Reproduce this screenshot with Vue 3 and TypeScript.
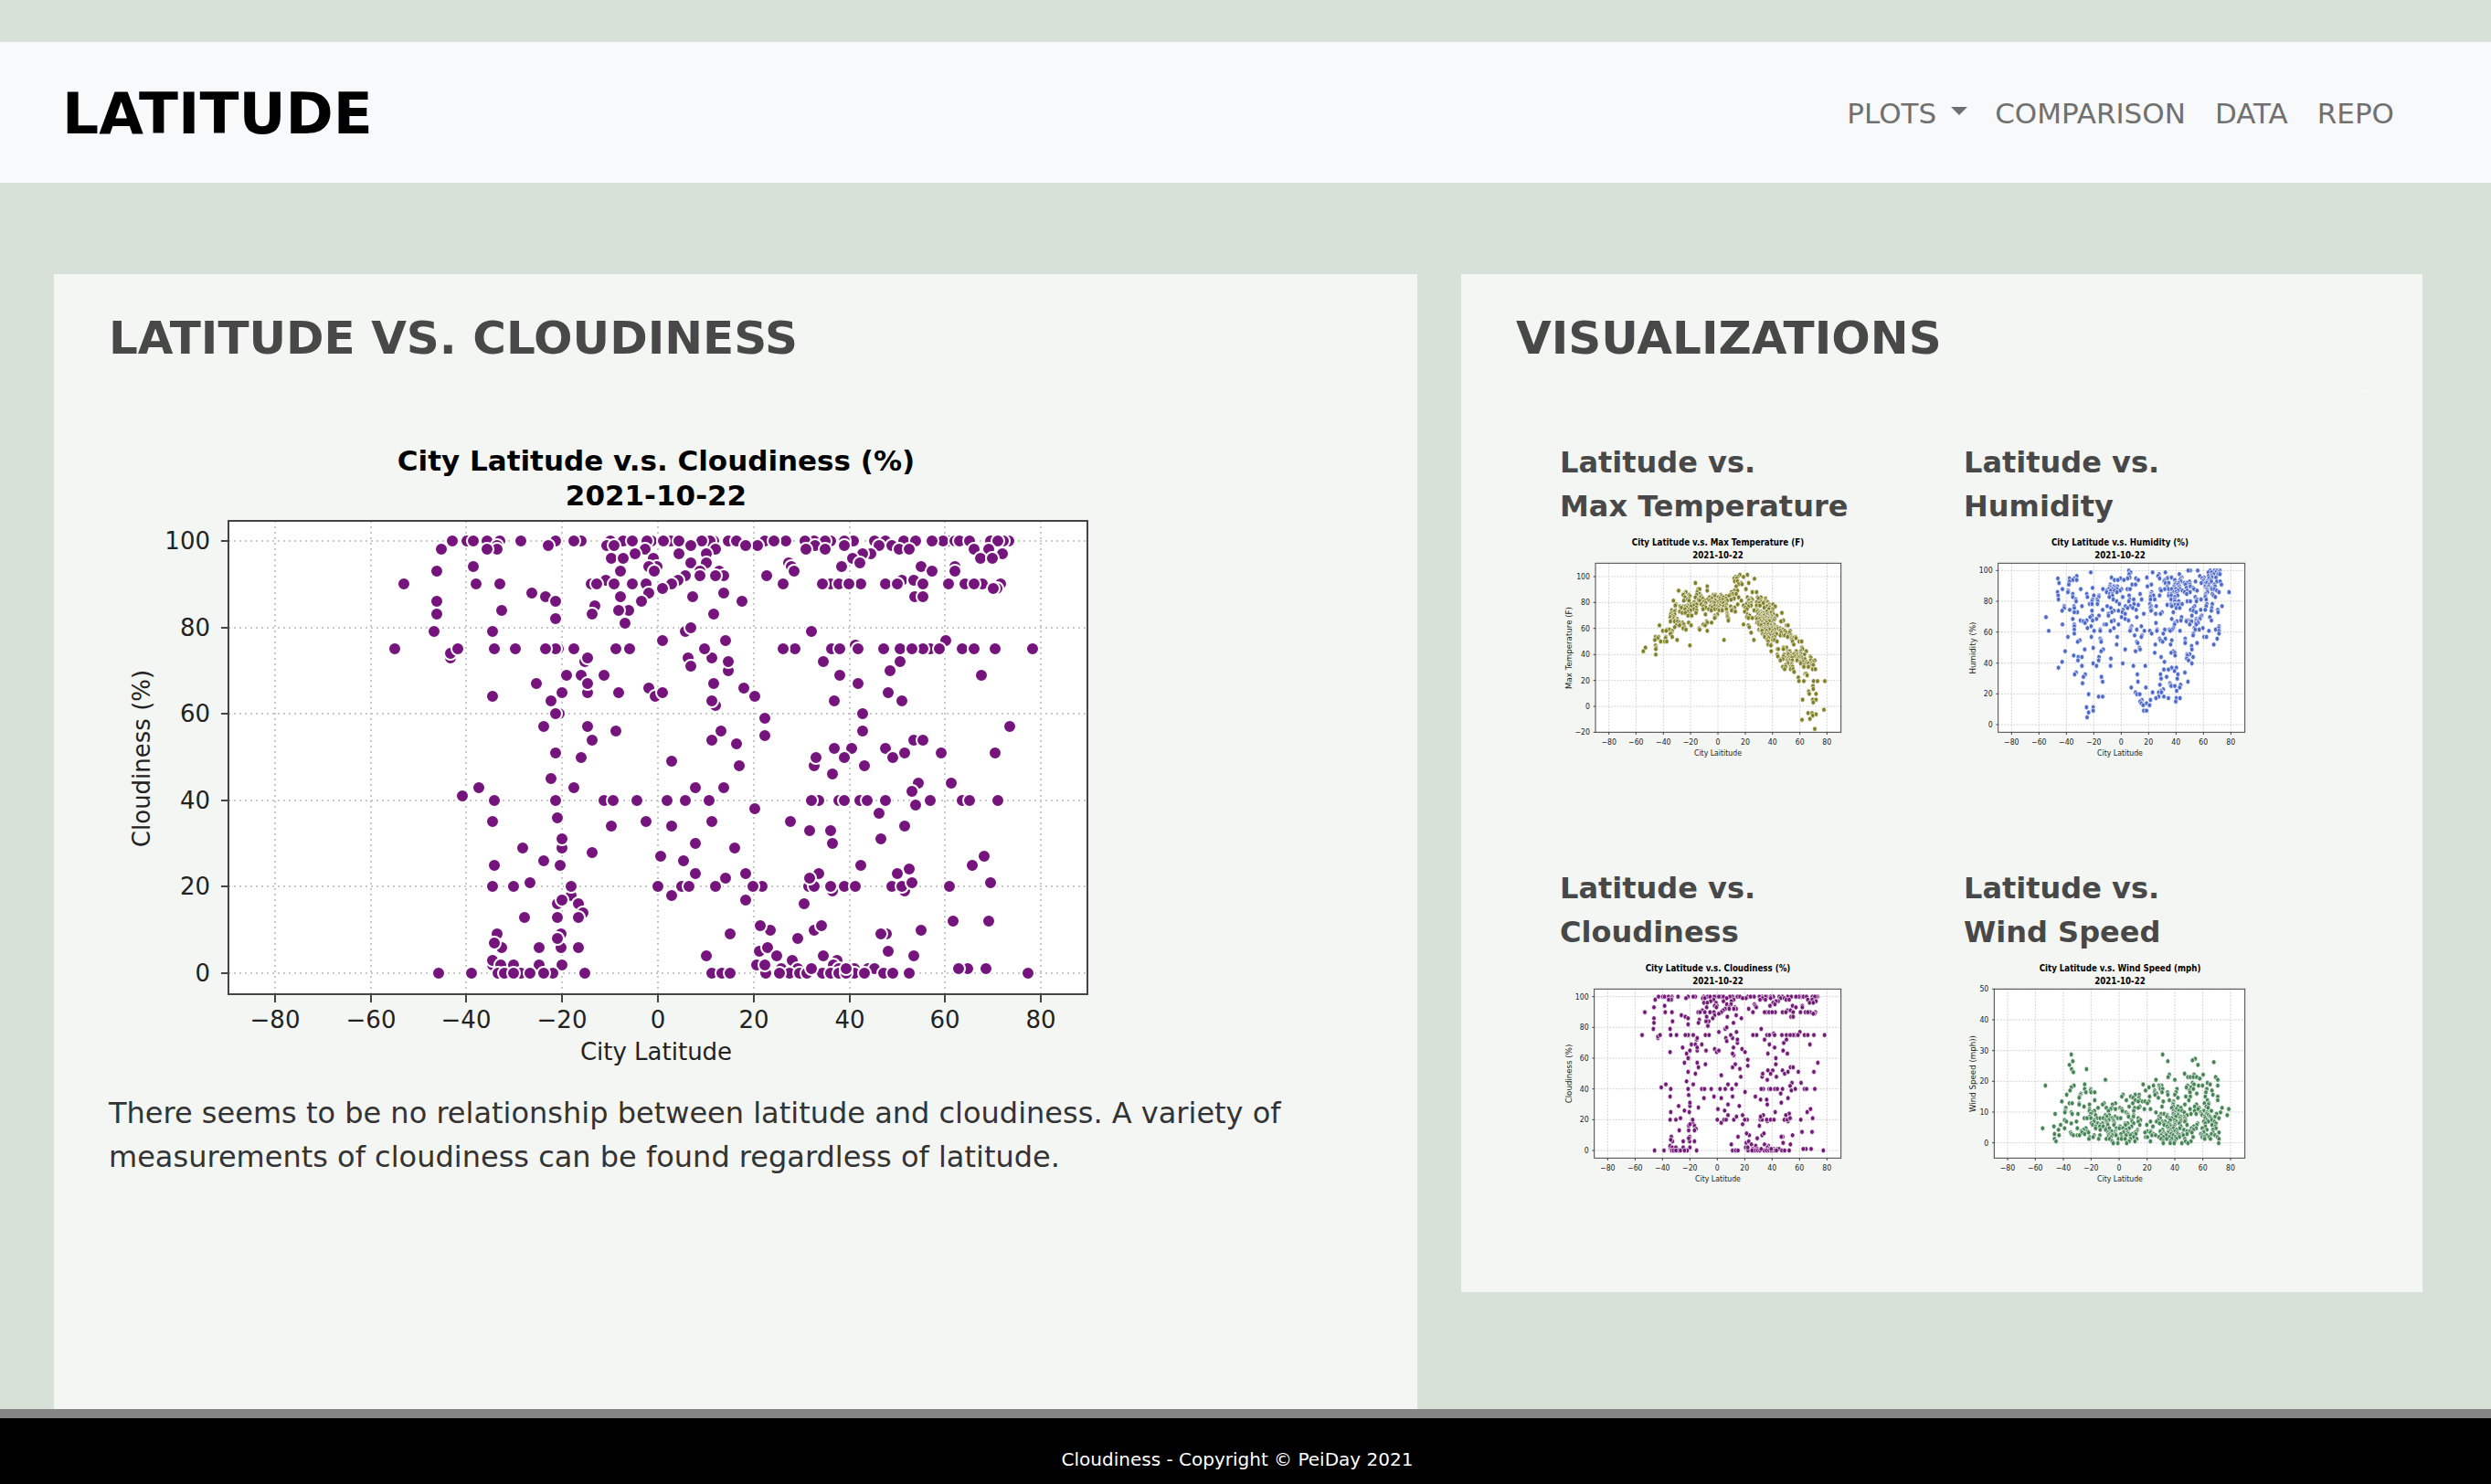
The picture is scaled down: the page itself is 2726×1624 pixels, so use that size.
<script setup lang="ts">
interface Dot { x: number; y: number }
interface Tick { at: number; text: string }
interface Chart {
  id: string
  heading: string
  title: string
  xLabel: string
  yLabel: string
  color: string
  view: string
  frame: { x: number; y: number; w: number; h: number }
  xTicks: Tick[]
  yTicks: Tick[]
  dots: Dot[]
}

// Cloudiness percentage, followed by the latitudes of the cities measured at it.
const cloudiness: [number, number[]][] = [
  [100, [-39.8, -42.9, -38.5, -33.1, -35.6, -28.7, -21.4, -16.1, -17.5, -10, -7.2, -5.3, -1.3, -2.3, 2.6, 1.1, 4.4, 11.6, 10.8, 9.2, 14.6, 16.5, 22.3, 26.8, 24.3, 32.6, 30.7, 36, 35, 40.8, 38.9, 45.2, 47.6, 51.3, 53.9, 60.8, 59.5, 57.3, 62, 62.9, 65, 73.2, 72.2, 69.4, 71]],
  [99, [-22.9, -33.5, -10.6, -9.2, 6.8, 20.8, 18.4, 32.9, 46.2, 48.9, 38.9]],
  [98, [-45.3, -33.6, -35.6, 12, -2.6, 31, 35, 50.3, 52.5, 66.1, 69]],
  [97, [-4.8, 4.4, 10.2, 44.5, 42.8, 71.9]],
  [96, [-9.8, -7.3, -0.9, 40.7, 67.4, 69.9]],
  [95, [6.8, 10.1, 27.2, 42.1]],
  [94, [-38.5, -0.2, -1.9, 27.8, 38.4, 54.9, 62.1]],
  [93, [-46.2, -7.8, -0.7, 8.7, 12.8, 28.4, 57.3, 62.1]],
  [92, [5.8, 8.7, 13.7, 12.1, 22.8]],
  [91, [-10.8, 4.2, 51, 53.4]],
  [90, [-53, -38, -33.1, -14, -12.7, -9.2, -5.3, -2.5, 2.9, 26.1, 36, 34.4, 37.7, 42.3, 39.9, 47.6, 50, 55.4, 60.7, 64.2, 67.7, 66.1, 71.5]],
  [89, [1, 70.8, 70]],
  [88, [-26.3, -1.9, 13.7]],
  [87, [-23.4, -7.8, 7.3, 53.7, 55.4]],
  [86, [-46.2, -21.4, -3.4, 17.5]],
  [85, [-13.2]],
  [84, [-32.6, -6.2, -8.3]],
  [83, [-46.2, -13.7, 11.7]],
  [82, [-21.4]],
  [81, [-6.8]],
  [79, [-46.7, -34.5, 5.7, 32]],
  [80, [6.8]],
  [77, [1, 14.1, 60.2]],
  [76, [41.2]],
  [73, [-43.3]],
  [74, [-43.4]],
  [72, [-15.2]],
  [73, [-14.6, 6.3, 11.2]],
  [75, [-54.9, -41.8, -34.1, -29.7, -20.8, -21.4, -23.4, -17.5, -8.7, -5.9, 9.7, 28.7, 26.1, 36.3, 37.9, 41.8, 47.1, 50.5, 56.8, 55.4, 53, 58.8, 63.6, 66.1, 70.4, 78.2]],
  [70, [14.6, 48.5]],
  [72, [14.6, 34.5, 50.5]],
  [71, [6.8]],
  [69, [-19, -16.1, -11.3, 37.9, 67.5]],
  [65, [-20, -14.6, -8.3]],
  [67, [-25.3, -14.6, 11.7, 41.8]],
  [66, [-1.9, 18]],
  [64, [-34.5, -0.5, 20.3]],
  [65, [1, 48.1]],
  [62, [12.1]],
  [63, [-22.4, 11.2, 36.9, 51]],
  [60, [-20.6, -21.4, 42.7]],
  [59, [22.3]],
  [57, [-23.9, -14.6, 73.4]],
  [56, [-8.7, 13.1, 42.7]],
  [55, [22.3]],
  [54, [-13.7, 11.2, 53.4, 55.4]],
  [53, [16.5]],
  [52, [36.9, 40.4, 47.6]],
  [50, [-16.1, 38.9, 49.1]],
  [51, [-21.4, 51.5, 59.2, 70.4]],
  [49, [2.9]],
  [48, [17, 32.6, 43.2]],
  [50, [33.1]],
  [46, [36.5]],
  [45, [-22.4]],
  [44, [54.4, 61.2]],
  [43, [-37.5, -17.5, 7.8, 13.7]],
  [42, [53]],
  [41, [-40.9]],
  [39, [53.9]],
  [40, [-34.1, -21.4, -11.3, -9.3, -4.4, 2, 5.8, 10.6, 33.6, 32.1, 37.7, 38.9, 42.1, 43.7, 47.6, 56.8, 63.5, 65.1, 71]],
  [38, [20.3]],
  [37, [46.2]],
  [36, [-21]],
  [35, [-34.5, -2.5, 11.2, 27.7]],
  [34, [-9.8, 2.9, 51.5]],
  [30, [7.8, 36.5]],
  [33, [31.6, 36]],
  [29, [-28.2, -20, 16]],
  [31, [-20, 46.6]],
  [28, [-13.7]],
  [27, [0.5, 68.1]],
  [26, [-23.9, 5.3]],
  [25, [-34.1, -20.5, 42.3, 65.6]],
  [24, [52.5]],
  [23, [7.8, 18.4, 33.6, 50]],
  [18, [-18.1, 2.9]],
  [19, [36.5, 51.5]],
  [20, [-34.5, -30.2, -18.1, 0, 4.9, 6.4, 12.1, 21.8, 19.9, 31.4, 32.6, 36, 38.9, 41.3, 48.9, 51, 60.8]],
  [22, [14.1, 31.6]],
  [21, [-26.8, 53, 69.5]],
  [16, [-21, -16.6, 30.6]],
  [17, [-20, 18.4]],
  [14, [-15.6]],
  [13, [-27.8, -21, -16.6]],
  [12, [61.7, 69]],
  [10, [23.4, 32.6, 54.9]],
  [11, [21.4, 34.1]],
  [9, [-33.6, -20.3, 15.1, 47.8, 46.6]],
  [6, [-32.6, -24.8, -20.3, -16.6]],
  [7, [-34.1]],
  [8, [-21, 29.2]],
  [5, [21.2, 48.1]],
  [6, [22.9]],
  [4, [10.2, 24.8, 34.5, 53.4]],
  [2, [-34.5]],
  [3, [-34.5, 28.1, 37.4]],
  [2, [-32.8, -30.2, -24.8, -20, 20.6, 36.7]],
  [1, [25.7, 29.2, 37.7, 41, 43.8, 45.2]],
  [0, [-45.8, -39, -33.4, -32, -28.6, -30.2, -26.8, -21.9, -23.9, -15.2, 11.2, 13.4, 15.1, 22.5, 27.4, 25.3, 29.5, 31.2, 34.3, 36, 37.7, 41, 39.4, 43.2, 47.1, 49.1, 52.5, 77.3]],
  [2, [22.3]],
  [1, [32.1, 39.4, 64.6, 62.7, 68.5]],
]

function plotCloudiness(x0: number, dx: number, y0: number, dy: number): Dot[] {
  return cloudiness.flatMap(([v, lats]) =>
    lats.map((lat) => ({ x: Math.round(x0 + lat * dx), y: Math.round(y0 - v * dy) })))
}

// Rows of "y: x x x" in drawing units.
function parse(rows: string): Dot[] {
  return rows.trim().split('\n').flatMap((row) => {
    const [y, xs] = row.split(':')
    return xs.trim().split(/\s+/).map((x) => ({ x: Number(x), y: Number(y) }))
  })
}

function latTicks(x0: number, dx: number): Tick[] {
  return [-80, -60, -40, -20, 0, 20, 40, 60, 80].map((v) => ({
    at: Math.round(x0 + v * dx),
    text: String(v).replace('-', '−'),
  }))
}

function valueTicks(values: number[], y0: number, dy: number): Tick[] {
  return values.map((v) => ({ at: Math.round(y0 - v * dy), text: String(v).replace('-', '−') }))
}

const main = {
  frame: { x: 250, y: 570, w: 940, h: 518 },
  xTicks: latTicks(720, 5.24),
  yTicks: valueTicks([0, 20, 40, 60, 80, 100], 1065, 4.73),
  dots: plotCloudiness(720, 5.24, 1065, 4.73),
}

const charts: Chart[] = [
  {
    id: 'temperature',
    heading: 'Max Temperature',
    title: 'City Latitude v.s. Max Temperature (F)',
    xLabel: 'City Laititude',
    yLabel: 'Max Temperature (F)',
    color: '#808026',
    view: '81 330 960 780',
    frame: { x: 198, y: 439, w: 806, h: 555 },
    xTicks: latTicks(600, 4.48),
    yTicks: valueTicks([-20, 0, 20, 40, 60, 80, 100], 909, 4.26),
    dots: parse(`
477: 672 697
484: 684 665 657
489: 653 662
490: 720
498: 655 664
504: 526 701 677
508: 668 679
515: 565 660
524: 535 692 540
529: 471 565 654 664
534: 495 532 645 713 727
540: 488 540 655 648 660
543: 486 505 530 585 610 640 592
547: 508 545 590 612 628 636
551: 492 526 543 572 601 618 668 697 741 730
555: 505 550 580 606 627 653 710 733 756
559: 499 536 565 590 615 640 643 713 702
562: 454 488 505 540 556 573 592 605 630 677 701 741 755
567: 522 553 578 585 600 622 710 727 742 763 752
570: 560 589 608 618 697 708 735 749
574: 462 512 521 530 545 601 628 665 702 768 781 692
578: 460 500 520 556 577 590 605 624 684 709 727 765 738
581: 476 485 494 511 552 575 598 618 642 700 760 788
585: 480 498 529 560 580 602 626 655 690 752 770
590: 492 506 521 551 570 590 600 613 628 647 695 725 767 780
594: 448 460 510 530 578 604 614 645 722 731 719
598: 457 475 500 688 657 730 742 760 779
602: 447 483 493 528 630 736 745 750 770 775 810
607: 445 458 508 559 598 631 697 732 742 753 763 783
611: 450 502 514 590 631 704 738 747 752 768 775 793
616: 444 455 592 632 695 726 741 756 770 778
619: 589 700 713 731 744 760 768 786
622: 454 466 635 728 738 750 767 776 786
627: 447 462 634 743 752 762 773 783 815
630: 444 458 468 563 807 740 757 769
634: 475 484 504 579 565 728 733 746 760 780
640: 479 488 552 684 735 747 753 765 782 784
643: 408 463 474 512 558 700 742 775 825 830 786
649: 458 490 703 750 756 764 777 786 795
653: 486 539 745 757 768 779 788 797 805
657: 432 441 495 540 735 742 755 770 786 810 813
661: 419 565 430 450 742 745 760 780 805 820 837
667: 447 709 765 778 788 808 825 835
671: 444 747 757 768 784 792
676: 752 763 773 782 805 815 820 830 840
681: 395 405 429 450 754 765 786 829 843 855
685: 402 428 766 780 842 848 856
691: 393 466 620 718 762 780 786 843
696: 425 432 412 765 794 867 875 845
706: 765 775 849
709: 508 395 774
716: 362 397 825 815 876
721: 396 795 815 878 798
728: 355 775 830 836 857 890 872
735: 829 840 852 872
739: 396 795 817 831 845 849 860 876 884
745: 797 815 840 854 862 870 903
749: 825 832 843 864 877 905
754: 806 813 829 860 880 886
758: 805 827 836 844 918 860 905
763: 829 870 880 891 912
768: 830 842 872 889 897 907
773: 822 841 883 908 913
779: 813 822 839 845 882 896 897
787: 819 839 847 911 920
796: 850
802: 886 890
807: 893
814: 864
826: 866 914 927 951 882
842: 912
852: 913
860: 898
868: 900 922
887: 878 911 922
896: 913
920: 948
931: 896 909
935: 922
939: 911
950: 902
953: 876
983: 918
`),
  },
  {
    id: 'humidity',
    heading: 'Humidity',
    title: 'City Latitude v.s. Humidity (%)',
    xLabel: 'City Latitude',
    yLabel: 'Humidity (%)',
    color: '#4d69c9',
    view: '87 330 960 780',
    frame: { x: 200, y: 439, w: 810, h: 555 },
    xTicks: latTicks(604, 4.5),
    yTicks: valueTicks([0, 20, 40, 60, 80, 100], 969, 5.06),
    dots: parse(`
463: 629 831 824 855 896 910 918 928
469: 504 635 707 749 890 901 915 925
475: 630 728 795 907 922 928
481: 458 725 862 891 901
486: 572 632 688 757 769 803 876 902 915
489: 396 434 450 602 625 652 730 755 799 870 892
494: 445 458 582 593 613 660 747 780 797 875 898
499: 434 745 800 848 828 872 885 900 918 929
504: 400 749 760 783 793 811 820 867 880 885
509: 432 568 640 651 703 780 790 815 830 892 910 933
515: 580 690 567 591 755 778 795 831 880 890 912
520: 510 570 585 755 780 793 818 840 885 900
524: 411 471 544 562 575 590 605 624 633 732 747 760 770 784 797 843 885 902 910
529: 430 556 570 582 600 735 790 805 820 853 887 918
534: 395 429 556 590 704 776 784 812 830 887 925 958
540: 445 491 566 575 666 702 760 768 787 819 881 903
545: 397 514 531 575 630 702 710 730 760 768 789 880 907
550: 445 493 565 530 609 700 780 847 880 913
558: 398 455 510 525 578 632 645 671 700 714 768 780 852 866 883
564: 456 508 527 589 629 780 793 821 831 851
573: 500 508 526 598 646 698 768 780 796 804 885 903
576: 660 755 767 780 790
580: 417 449 475 558 618 634 702 719 770 845 883 935
586: 417 450 570 625 642 700 785 796 840 901
592: 435 543 610 653 704 832 865 880 921
595: 410 508 580 595 702 841 900
600: 460 450 573 608 738 775 850 922
605: 562 617 678 717 733
611: 508 531 562 836 868
616: 357 502 605 655 802 864 895
622: 445 523 617 770 850 862
627: 470 491 510 580 628 800 817 825 850 900
630: 479 572 787 818 830 835 856
635: 485 718 780 849 856
640: 411 450 549 555 595 779 850 829
646: 450 505 638 670 925
652: 493 580 635 775 872 844 924
657: 450 535 655 635 722 747 762 771 847 860 914
661: 366 515 535 568 633 680 698 721 765 797 892 925
670: 450 704 742 841 925
676: 648 672 840
681: 429 506 591 670 876 884
687: 535 730 749 814 919
692: 468 538 733 770
697: 461 538 655 740 814
701: 658 814 853
706: 589 716 766 908
711: 835
717: 512 664
722: 484 545 617 666 836
728: 420 538 651 775
733: 714 768 780
738: 820 829
742: 448 781 821
747: 463 531 475 735 840
752: 570 819
758: 462 530 825
763: 410 746
768: 512 609 836
776: 475 523 569 644 683
782: 398 770 785
788: 744 759
793: 779
798: 456 813
804: 451 486 657 733 790
812: 480 539 753
818: 735 788
828: 543 659 823
833: 477 764
838: 731 767 799
842: 768 780
847: 637 685 796
853: 742
858: 735 786
863: 651 707 727 736
869: 497 656 665
877: 530 543 727 744
882: 718 759 785 797
888: 672 700
893: 666 783
899: 670 687
905: 676 697
912: 490 512
923: 512 678 687
929: 497
945: 492
`),
  },
  {
    id: 'cloudiness',
    heading: 'Cloudiness',
    title: 'City Latitude v.s. Cloudiness (%)',
    xLabel: 'City Latitude',
    yLabel: 'Cloudiness (%)',
    color: '#701a75',
    view: '81 348 960 780',
    frame: { x: 194, y: 457, w: 810, h: 555 },
    xTicks: latTicks(598, 4.5),
    yTicks: valueTicks([0, 20, 40, 60, 80, 100], 987, 5.05),
    dots: plotCloudiness(598, 4.5, 987, 5.05),
  },
  {
    id: 'wind',
    heading: 'Wind Speed',
    title: 'City Latitude v.s. Wind Speed (mph)',
    xLabel: 'City Latitude',
    yLabel: 'Wind Speed (mph))',
    color: '#468455',
    view: '87 348 960 780',
    frame: { x: 187, y: 457, w: 823, h: 555 },
    xTicks: latTicks(597, 4.58),
    yTicks: valueTicks([0, 10, 20, 30, 40, 50], 962, 10.1),
    dots: parse(`
672: 440 740
686: 847
691: 838
694: 445 757
697: 908
706: 434 856
720: 441 490
730: 447
735: 812
738: 762 843 873
746: 758 823 831 841 852 914
751: 862
755: 552 718 780 921
765: 838 887
770: 484 676 843 896
774: 449 355 710 737 728 822 858 871 921
780: 440 695 730 818 833
785: 484 504 733 787 740 841 885
790: 436 503 684 714 828 902
796: 488 505 517 714 738 756 784 830 882 517
800: 472 720 852
804: 425 470 610 650 663 715 757 780 905
810: 467 606 635 697 816 831 880 921
814: 466 643 662 726 790
822: 517 621 650 665 762 826 887 921
826: 409 660 674 682 695 742 776
832: 434 443 466 548 585 642 690 774 877 892
836: 466 500 543 575 775 813 851 890
843: 482 630 665 738 790 775 845 883
847: 422 528 555 573 600 648 660 770 800 860 889 935
851: 500 569 585 606 680 700 785 830 856 957
857: 420 500 516 562 608 645 776 793 804 845 875 900
862: 419 440 508 620 718 780 811 865 886 930
867: 387 443 462 504 625 735 745 775 790 833 850 868 885 917
871: 520 552 565 627 645 755 780 790 820 870 890 952
876: 501 557 584 628 644 728 754 783 800 811 878 895 912
881: 483 492 505 525 535 545 568 575 593 602 660 732 762 770 797 813 880 899 925
887: 418 515 553 563 578 638 667 725 765 780 800 815 885 901
892: 424 457 515 556 580 640 660 700 720 740 748 785 798 813 875 890 910
898: 440 506 527 542 558 582 617 625 645 730 743 760 780 795 855 880 915
903: 405 510 535 560 580 618 665 688 745 765 780 820 852 902
908: 383 520 534 545 600 638 708 755 767 777 800 842 880 913
914: 346 418 460 488 520 556 565 588 598 610 630 760 775 796 835 850 870 915
919: 398 480 535 553 620 657 740 765 785 810 841 885 905
924: 473 493 573 585 613 655 690 701 732 762 780 820 830 875
928: 438 475 497 561 583 612 625 650 682 700 743 757 770 788 836 875 905 925
933: 385 441 484 565 585 603 628 640 652 710 738 750 768 790 805 820 865 900
937: 400 447 460 467 515 534 562 575 587 620 635 705 717 735 752 775 795 808 870 885 912
943: 500 512 561 570 605 645 684 690 728 742 762 782 795 840 870 877 893 920
949: 385 498 530 555 566 595 605 617 634 655 735 753 770 785 813 878 897 925
957: 390 574 630 649 700 742 765 780 815 833
963: 578 593 622 742 765 778 803 823 924
`),
  },
]

const navLinks = ['COMPARISON', 'DATA', 'REPO']
</script>

<template>
  <div class="page">
    <header class="navbar">
      <a class="brand" href="#">LATITUDE</a>
      <nav class="links">
        <button type="button" class="nav-item" aria-haspopup="true">PLOTS<span class="caret"></span></button>
        <a v-for="link in navLinks" :key="link" class="nav-item" href="#">{{ link }}</a>
      </nav>
    </header>

    <main class="content">
      <section class="card">
        <h1 class="card-title">LATITUDE VS. CLOUDINESS</h1>
        <hr class="rule">
        <svg class="chart chart-main" viewBox="119 470 1100 724" role="img" aria-label="City Latitude v.s. Cloudiness (%)">
          <rect class="paper" :x="main.frame.x" :y="main.frame.y" :width="main.frame.w" :height="main.frame.h" />
          <g class="grid">
            <line v-for="t in main.xTicks" :key="t.text" :x1="t.at" :x2="t.at" :y1="main.frame.y" :y2="main.frame.y + main.frame.h" />
            <line v-for="t in main.yTicks" :key="t.text" :x1="main.frame.x" :x2="main.frame.x + main.frame.w" :y1="t.at" :y2="t.at" />
          </g>
          <g class="dots" fill="#75147c">
            <circle v-for="(d, i) in main.dots" :key="i" :cx="d.x" :cy="d.y" r="7" />
          </g>
          <g class="axis">
            <line v-for="t in main.xTicks" :key="t.text" :x1="t.at" :x2="t.at" :y1="main.frame.y + main.frame.h" :y2="main.frame.y + main.frame.h + 9" />
            <line v-for="t in main.yTicks" :key="t.text" :x1="main.frame.x - 8" :x2="main.frame.x" :y1="t.at" :y2="t.at" />
            <rect :x="main.frame.x" :y="main.frame.y" :width="main.frame.w" :height="main.frame.h" fill="none" />
          </g>
          <g class="chart-title">
            <text x="718" y="515">City Latitude v.s. Cloudiness (%)</text>
            <text x="718" y="553">2021-10-22</text>
          </g>
          <g class="label">
            <text v-for="t in main.xTicks" :key="t.text" :x="t.at" y="1125" text-anchor="middle">{{ t.text }}</text>
            <text v-for="t in main.yTicks" :key="t.text" x="230" :y="t.at + 9" text-anchor="end">{{ t.text }}</text>
            <text x="718" y="1160" text-anchor="middle">City Latitude</text>
            <text transform="translate(164 830) rotate(-90)" text-anchor="middle">Cloudiness (%)</text>
          </g>
        </svg>
        <p class="copy">There seems to be no relationship between latitude and cloudiness. A variety of measurements of cloudiness can be found regardless of latitude.</p>
      </section>

      <section class="card gallery">
        <h2 class="card-title">VISUALIZATIONS</h2>
        <hr class="rule">
        <div class="thumbs">
          <a v-for="c in charts" :key="c.id" class="thumb" href="#">
            <h3 class="thumb-title">Latitude vs.<br>{{ c.heading }}</h3>
            <svg class="chart chart-thumb" :viewBox="c.view" role="img" :aria-label="c.title">
              <rect class="paper" :x="c.frame.x" :y="c.frame.y" :width="c.frame.w" :height="c.frame.h" />
              <g class="grid">
                <line v-for="t in c.xTicks" :key="t.text" :x1="t.at" :x2="t.at" :y1="c.frame.y" :y2="c.frame.y + c.frame.h" />
                <line v-for="t in c.yTicks" :key="t.text" :x1="c.frame.x" :x2="c.frame.x + c.frame.w" :y1="t.at" :y2="t.at" />
              </g>
              <g class="dots" :fill="c.color">
                <ellipse v-for="(d, i) in c.dots" :key="i" :cx="d.x" :cy="d.y" rx="7" ry="8" />
              </g>
              <g class="axis">
                <line v-for="t in c.xTicks" :key="t.text" :x1="t.at" :x2="t.at" :y1="c.frame.y + c.frame.h" :y2="c.frame.y + c.frame.h + 8" />
                <line v-for="t in c.yTicks" :key="t.text" :x1="c.frame.x - 7" :x2="c.frame.x" :y1="t.at" :y2="t.at" />
                <rect :x="c.frame.x" :y="c.frame.y" :width="c.frame.w" :height="c.frame.h" fill="none" />
              </g>
              <g class="chart-title">
                <text x="600" :y="c.frame.y - 58">{{ c.title }}</text>
                <text x="600" :y="c.frame.y - 17">2021-10-22</text>
              </g>
              <g class="label">
                <text v-for="t in c.xTicks" :key="t.text" :x="t.at" :y="c.frame.y + 595" text-anchor="middle">{{ t.text }}</text>
                <text v-for="t in c.yTicks" :key="t.text" :x="c.frame.x - 18" :y="t.at + 9" text-anchor="end">{{ t.text }}</text>
                <text x="600" :y="c.frame.y + 632" text-anchor="middle">{{ c.xLabel }}</text>
                <text class="label-y" :transform="`translate(${c.view.startsWith('81') ? 120 : 126} ${c.frame.y + 278}) rotate(-90)`" text-anchor="middle">{{ c.yLabel }}</text>
              </g>
            </svg>
          </a>
        </div>
      </section>
    </main>

    <footer class="footer">Cloudiness - Copyright © PeiDay 2021</footer>
  </div>
</template>

<style>
body {
  margin: 0;
  background: #d8e1d8;
}
</style>

<style scoped>
.page {
  box-sizing: border-box;
  display: flex;
  flex-direction: column;
  min-height: 100vh;
  padding-top: 46px;
  font-family: Verdana, "DejaVu Sans", sans-serif;
}
.navbar {
  box-sizing: border-box;
  display: flex;
  align-items: center;
  justify-content: space-between;
  height: 154px;
  padding: 2px 90px 0 68px;
  background: #f8f9fb;
}
.brand {
  color: #000;
  font-size: 63px;
  font-weight: 700;
  text-decoration: none;
}
.links {
  display: flex;
}
.nav-item {
  display: flex;
  align-items: center;
  padding: 0 16px;
  border: 0;
  background: none;
  color: #707070;
  font: inherit;
  font-size: 31px;
  text-decoration: none;
}
.nav-item:first-child {
  padding-right: 14px;
}
.caret {
  margin: 0 0 6px 16px;
  border: 9px solid transparent;
  border-top-color: currentColor;
  border-bottom: 0;
}
.content {
  display: grid;
  flex: 1;
  grid-template-columns: 1492fr 1052fr;
  gap: 48px;
  padding: 100px 75px 0 59px;
}
.card {
  box-sizing: border-box;
  min-width: 0;
  padding: 34px 60px 0;
  background: #f4f6f3;
}
.gallery {
  align-self: start;
  padding-bottom: 108px;
}
.card-title {
  margin: 0;
  color: #484848;
  font-size: 50px;
  line-height: 72px;
}
.rule {
  height: 2px;
  margin: 22px 0 40px;
  border: 0;
  background: #f7f8f6;
}
.chart {
  display: block;
  font-family: "DejaVu Sans", sans-serif;
}
.chart-main {
  width: 100%;
  max-width: 1100px;
}
.chart-thumb {
  width: 320px;
  margin-top: 2px;
  font-family: "DejaVu Sans Condensed", "DejaVu Sans", sans-serif;
  font-stretch: semi-condensed;
}
.paper {
  fill: #fff;
}
.grid {
  stroke: #c8c8c8;
  stroke-width: 2;
  stroke-dasharray: 2 4;
}
.axis {
  stroke: #444;
  stroke-width: 2;
}
.dots {
  stroke: #fff;
  stroke-width: 2;
}
.chart-title {
  fill: #000;
  font-size: 31px;
  font-weight: 700;
  text-anchor: middle;
}
.label {
  fill: #222;
  font-size: 26px;
}
.label-y {
  font-family: "DejaVu Sans", sans-serif;
  font-stretch: normal;
}
.chart-thumb .chart-title {
  font-size: 29px;
}
.chart-thumb .grid {
  stroke: #d4d4d4;
  stroke-width: 3;
  stroke-dasharray: 6 4;
}
.chart-thumb .axis {
  stroke-width: 3;
}
.copy {
  margin: 0;
  color: #333;
  font-size: 32px;
  line-height: 48px;
}
.thumbs {
  display: grid;
  grid-template-columns: 442px 442px;
  row-gap: 108px;
  padding: 12px 0 0 48px;
}
.thumb {
  color: inherit;
  text-decoration: none;
}
.thumb-title {
  margin: 0;
  color: #484848;
  font-size: 32px;
  line-height: 48px;
}
.footer {
  box-sizing: border-box;
  height: 82px;
  padding: 24px 18px 0 0;
  border-top: 10px solid #858585;
  background: #000;
  color: #fff;
  font-size: 20px;
  line-height: 42px;
  text-align: center;
}
</style>
